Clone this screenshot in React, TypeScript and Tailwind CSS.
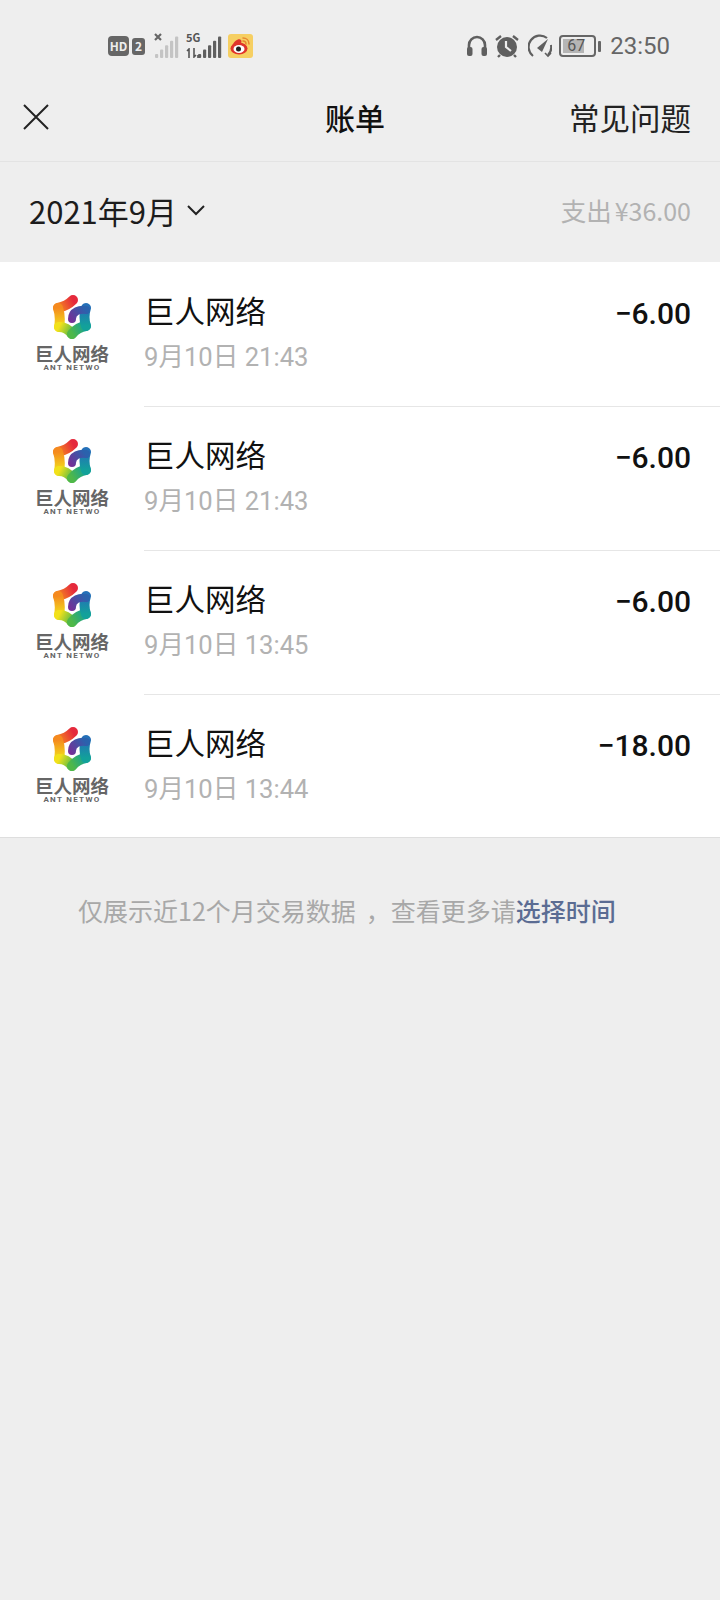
const font = { fontFamily: '"Noto Sans CJK SC", Roboto, sans-serif' }

const bills = [
  { time: '9月10日 21:43', amount: '−6.00' },
  { time: '9月10日 21:43', amount: '−6.00' },
  { time: '9月10日 13:45', amount: '−6.00' },
  { time: '9月10日 13:44', amount: '−18.00' },
]

function Bars({ lit, total = 5 }: { lit: number; total?: number }) {
  return (
    <svg width="24" height="22" viewBox="0 0 24 22">
      {Array.from({ length: total }).map((_, i) => (
        <rect
          key={i}
          x={i * 5}
          y={18 - i * 4.4}
          width="3.2"
          height={4 + i * 4.4}
          rx="1"
          fill={i < lit ? '#5f5f5f' : '#c4c4c4'}
        />
      ))}
    </svg>
  )
}

function StatusBar() {
  return (
    <div className="flex h-[80px] items-center justify-between pl-[108px] pr-[50px] pt-[12px]">
      <div className="flex items-center">
        <span className="flex h-[20px] w-[21px] items-center justify-center rounded-[4px] bg-[#666] text-[12px] font-bold text-[#eee]">HD</span>
        <span className="ml-[3px] flex h-[17px] w-[13px] items-center justify-center rounded-[3px] bg-[#666] text-[12px] font-bold text-[#eee]">2</span>
        <div className="relative ml-[9px] h-[24px] w-[24px]">
          <svg className="absolute left-0 top-[-1px]" width="8" height="8" viewBox="0 0 8 8">
            <path d="M1 1l6 6M7 1L1 7" stroke="#666" strokeWidth="2.2" />
          </svg>
          <div className="absolute bottom-0 left-[1px]"><Bars lit={0} /></div>
        </div>
        <div className="relative ml-[8px] h-[24px] w-[36px]">
          <span className="absolute left-0 top-[-3px] text-[11px] font-bold leading-[13px] text-[#555]">5G</span>
          <svg className="absolute bottom-0 left-0" width="14" height="10" viewBox="0 0 14 10">
            <path d="M3 10V1L1 3M8 0v9l2-2M12 7v3" stroke="#555" strokeWidth="1.6" fill="none" />
          </svg>
          <div className="absolute bottom-0 right-0"><Bars lit={5} /></div>
        </div>
        <svg className="ml-[6px]" width="25" height="24" viewBox="0 0 25 24">
          <rect width="25" height="24" rx="3" fill="#f6cf62" />
          <ellipse cx="11" cy="14.5" rx="8.5" ry="6" fill="#e0342b" />
          <path d="M4 12c2-5 7-8 9-6 1 1 0 3 0 3" fill="#e0342b" />
          <ellipse cx="11" cy="15" rx="5.5" ry="4" fill="#fff" />
          <circle cx="10.5" cy="15" r="2.5" fill="#222" />
          <path d="M15 4c3 0 6 2 6 6M15 7c2 0 3 1 3 3" fill="none" stroke="#e8862e" strokeWidth="1.5" strokeLinecap="round" />
        </svg>
      </div>
      <div className="flex items-center">
        <svg width="22" height="22" viewBox="0 0 22 22">
          <path d="M3 14V10a8 8 0 0 1 16 0v4" fill="none" stroke="#5f5f5f" strokeWidth="2.6" />
          <rect x="1" y="12" width="5.5" height="9" rx="2" fill="#5f5f5f" />
          <rect x="15.5" y="12" width="5.5" height="9" rx="2" fill="#5f5f5f" />
        </svg>
        <svg className="ml-[7px]" width="24" height="24" viewBox="0 0 24 24">
          <circle cx="12" cy="13" r="10" fill="#5f5f5f" />
          <path d="M11 7v6l5 4" fill="none" stroke="#eee" strokeWidth="2.2" />
          <path d="M1 6l5-4M23 6l-5-4M5 21l-2 2M19 21l2 2" stroke="#5f5f5f" strokeWidth="2.4" />
        </svg>
        <svg className="ml-[9px]" width="24" height="24" viewBox="0 0 24 24">
          <path d="M5 22A10.5 10.5 0 0 1 19 4" fill="none" stroke="#5f5f5f" strokeWidth="2.2" />
          <path d="M23 11a11 11 0 0 1-3 10" fill="none" stroke="#5f5f5f" strokeWidth="2.2" />
          <path d="M9 14l11-9-6 13z" fill="#5f5f5f" />
          <path d="M17 19l3 3 3-3" fill="none" stroke="#5f5f5f" strokeWidth="1.6" />
        </svg>
        <div className="ml-[7px] flex items-center">
          <div className="flex h-[22px] w-[37px] items-center rounded-[4px] border-2 border-[#666] p-[2px]">
            <div className="flex h-full w-[21px] items-center bg-[#b5b5b5]">
              <span className="ml-[4px] text-[16px] leading-none text-[#555]" style={{ fontFamily: 'Roboto, sans-serif' }}>67</span>
            </div>
          </div>
          <div className="ml-[2px] h-[11px] w-[3px] rounded-[1px] bg-[#666]" />
        </div>
        <span className="ml-[9px] text-[24px] leading-none text-[#666]" style={{ fontFamily: 'Roboto, sans-serif' }}>23:50</span>
      </div>
    </div>
  )
}

function GiantLogo({ id }: { id: number }) {
  const seg = (n: string) => `url(#${n}${id})`
  return (
    <div className="flex w-[76px] flex-col items-center">
      <svg width="40" height="44" viewBox="0 0 40 44" fill="none" strokeLinecap="round" strokeLinejoin="round">
        <defs>
          <linearGradient id={`a${id}`} gradientUnits="userSpaceOnUse" x1="21" y1="5" x2="6" y2="13">
            <stop offset="0" stopColor="#e5293c" />
            <stop offset="1" stopColor="#f58a1f" />
          </linearGradient>
          <linearGradient id={`b${id}`} gradientUnits="userSpaceOnUse" x1="6" y1="13" x2="7" y2="32">
            <stop offset="0" stopColor="#f58a1f" />
            <stop offset="1" stopColor="#f2e11a" />
          </linearGradient>
          <linearGradient id={`c${id}`} gradientUnits="userSpaceOnUse" x1="7" y1="32" x2="20" y2="39">
            <stop offset="0" stopColor="#f2e11a" />
            <stop offset="1" stopColor="#4fb848" />
          </linearGradient>
          <linearGradient id={`d${id}`} gradientUnits="userSpaceOnUse" x1="20" y1="39" x2="34" y2="31">
            <stop offset="0" stopColor="#4fb848" />
            <stop offset="1" stopColor="#12a19a" />
          </linearGradient>
          <linearGradient id={`e${id}`} gradientUnits="userSpaceOnUse" x1="34" y1="31" x2="34" y2="13">
            <stop offset="0" stopColor="#12a19a" />
            <stop offset="1" stopColor="#2470b8" />
          </linearGradient>
          <linearGradient id={`f${id}`} gradientUnits="userSpaceOnUse" x1="33" y1="14" x2="17" y2="26">
            <stop offset="0" stopColor="#2a62ad" />
            <stop offset="1" stopColor="#7a2c95" />
          </linearGradient>
        </defs>
        <path d="M21 5Q15 11 6 13" stroke={seg('a')} strokeWidth="10" />
        <path d="M6 13Q9 22 7 32" stroke={seg('b')} strokeWidth="10" />
        <path d="M7 32Q15 32 20 39" stroke={seg('c')} strokeWidth="10" />
        <path d="M20 39Q26 32 34 31" stroke={seg('d')} strokeWidth="10" />
        <path d="M34 31Q31 22 34 13" stroke={seg('e')} strokeWidth="10" />
        <path d="M34 15C28 14 20 16 20 24" stroke={seg('f')} strokeWidth="8" />
      </svg>
      <span className="mt-[5px] whitespace-nowrap text-[18.5px] font-bold leading-[18px] text-[#666]">巨人网络</span>
      <div className="mt-[3px] whitespace-nowrap text-[8px] font-bold leading-[6px] tracking-[1.3px] text-[#666]" style={{ fontFamily: 'Roboto, sans-serif' }}>
        ANT NETWO
      </div>
    </div>
  )
}

export default function App() {
  return (
    <div className="h-[1600px] w-[720px] overflow-hidden bg-[#eeeeee]" style={font}>
      <StatusBar />

      {/* Nav */}
      <div className="flex h-[82px] items-center justify-between border-b border-[#e3e3e3] pb-[7px] pl-[23px] pr-[29px]">
        <svg width="26" height="26" viewBox="0 0 26 26">
          <path d="M1 1l24 24M25 1L1 25" stroke="#222" strokeWidth="2" fill="none" />
        </svg>
        <span className="ml-[92px] text-[30px] font-medium leading-none text-[#111]">账单</span>
        <span className="text-[30.5px] leading-none text-[#222]">常见问题</span>
      </div>

      {/* Month */}
      <div className="flex h-[100px] items-center justify-between pb-[4px] pl-[29px] pr-[29px]">
        <div className="flex items-center">
          <span className="text-[31px] leading-none text-[#1c1c1c]">2021年9月</span>
          <svg className="ml-[9px]" width="20" height="12" viewBox="0 0 20 12">
            <path d="M2 2l8 8 8-8" stroke="#222" strokeWidth="2" fill="none" />
          </svg>
        </div>
        <div className="flex items-center text-[#b2b2b2]">
          <span className="text-[25.5px] leading-none">支出</span>
          <span className="ml-[3px] text-[25px] leading-none">¥36.00</span>
        </div>
      </div>

      {/* List */}
      <div className="border-b border-[#dedede] bg-white pt-[1px]">
        {bills.map((b, i) => (
          <div key={i} className={`flex pl-[34px] ${i < 3 ? 'h-[144px]' : 'h-[142px]'}`}>
            <div className="pt-[32px]"><GiantLogo id={i} /></div>
            <div className={`ml-[34px] flex flex-1 justify-between pr-[29px] pt-[25px] ${i < 3 ? 'border-b border-[#e6e6e6]' : ''}`}>
              <div>
                <div className="text-[30.5px] leading-[44px] text-[#111]">巨人网络</div>
                <div className="mt-[3px] text-[25.6px] leading-[44px] text-[#b2b2b2]" style={{ fontFamily: 'Roboto, "Noto Sans CJK SC", sans-serif' }}>{b.time}</div>
              </div>
              <div className="pt-[4px] text-[30px] font-medium leading-[44px] text-[#111]" style={{ fontFamily: 'Roboto, sans-serif' }}>{b.amount}</div>
            </div>
          </div>
        ))}
      </div>

      {/* Footer note */}
      <div className="mt-[54px] whitespace-nowrap pl-[78px] text-[25px] leading-[36px] text-[#a8a8a8]">
        仅展示近12个月交易数据<span className="ml-[10px]">，</span>查看更多请<span className="font-medium text-[#5b6c93]">选择时间</span>
      </div>
    </div>
  )
}
